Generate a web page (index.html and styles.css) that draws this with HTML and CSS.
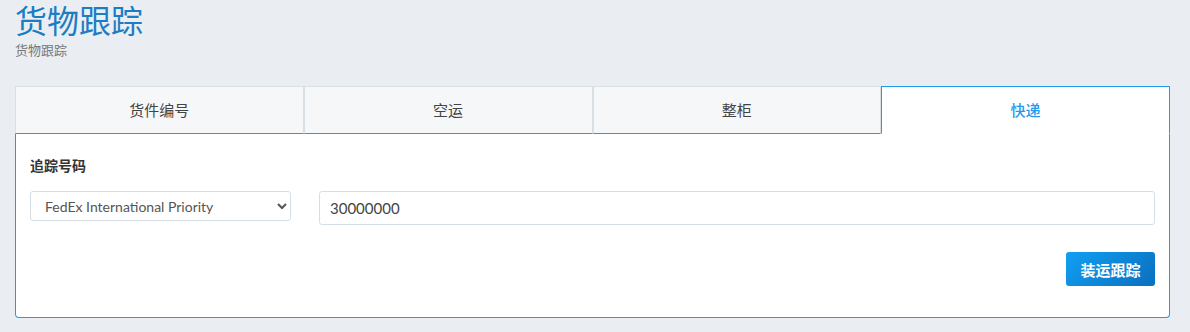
FILE: index.html
```html
<!DOCTYPE html>
<html lang="zh-CN">
<head>
    <meta charset="UTF-8">
    <meta name="viewport" content="width=device-width, initial-scale=1.0">
    <title>货物跟踪</title>
    <link rel="stylesheet" href="styles.css">
</head>
<body>
    <header class="page-head">
        <h1>货物跟踪</h1>
        <p class="subtitle">货物跟踪</p>
    </header>

    <div class="tracker">
        <ul class="tabs">
            <li>货件编号</li>
            <li>空运</li>
            <li>整柜</li>
            <li class="active">快递</li>
        </ul>
        <form class="panel">
            <label class="field-label" for="trackNo">追踪号码</label>
            <div class="field-row">
                <select class="carrier">
                    <option>FedEx International Priority</option>
                    <option>DHL Express</option>
                    <option>UPS</option>
                </select>
                <input type="text" id="trackNo" class="track-input" value="30000000">
            </div>
            <div class="actions">
                <button type="submit" class="btn-track">装运跟踪</button>
            </div>
        </form>
    </div>
</body>
</html>
```

FILE: styles.css
```css
body {
    font-family: Lato, "Noto Sans CJK SC", sans-serif;
    background-color: #eaeef3;
    margin: 0;
    padding: 0 20px 0 15px;
    color: #333;
}
.page-head h1 {
    margin: 0;
    font-size: 32px;
    font-weight: normal;
    line-height: 42px;
    color: #1b7dc4;
}
.page-head .subtitle {
    margin: 0;
    font-size: 13px;
    line-height: 16px;
    color: #777;
}
.tracker {
    margin-top: 28px;
}
.tabs {
    display: flex;
    list-style: none;
    margin: 0;
    padding: 0;
}
.tabs li {
    flex: 1;
    height: 46px;
    line-height: 46px;
    text-align: center;
    font-size: 15px;
    color: #444;
    background: #f5f7f9;
    border: 1px solid #d8dfe5;
    border-bottom: 1px solid #1e9bef;
}
.tabs li.active {
    background: #fff;
    color: #1e9bef;
    font-weight: 500;
    border: 1px solid #1e9bef;
    border-bottom-color: #fff;
}
.panel {
    background: #fff;
    border: 1px solid #1e9bef;
    border-top: none;
    border-radius: 0 0 4px 4px;
    padding: 21px 14px 31px 14px;
}
.field-label {
    display: block;
    font-size: 14px;
    font-weight: bold;
    color: #333;
    margin-bottom: 16px;
}
.field-row {
    display: flex;
    align-items: flex-start;
    gap: 28px;
}
.carrier {
    width: 261px;
    height: 30px;
    padding: 0 10px;
    font-family: Lato, sans-serif;
    font-size: 14px;
    color: #555;
    background: #fff;
    border: 1px solid #d5dee5;
    border-radius: 3px;
}
.track-input {
    flex: 1;
    height: 34px;
    box-sizing: border-box;
    padding: 0 10px;
    font-family: Lato, sans-serif;
    font-size: 15px;
    color: #444;
    border: 1px solid #d5dee5;
    border-radius: 3px;
}
.actions {
    display: flex;
    justify-content: flex-end;
    margin-top: 27px;
}
.btn-track {
    width: 89px;
    height: 34px;
    font-family: "Noto Sans CJK SC", sans-serif;
    font-size: 15px;
    font-weight: bold;
    color: #fff;
    background: linear-gradient(135deg, #119ff2, #0a6fbf);
    border: none;
    border-radius: 3px;
    cursor: pointer;
}
```
